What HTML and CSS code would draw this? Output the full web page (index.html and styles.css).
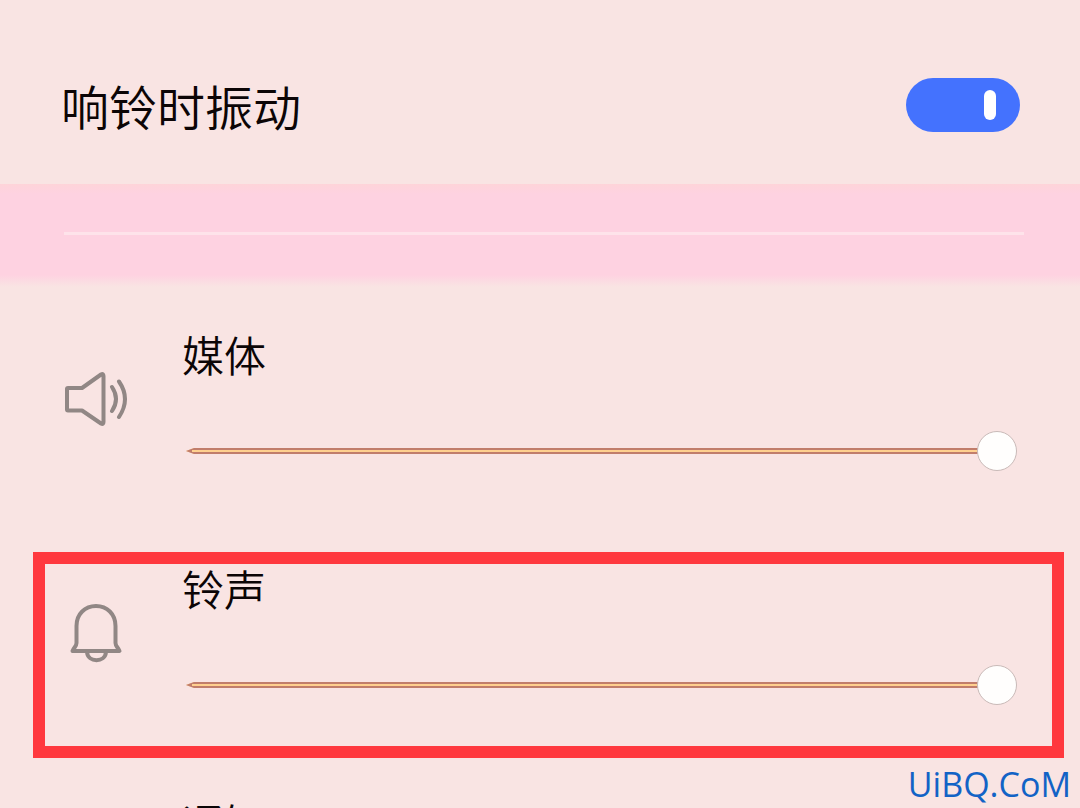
FILE: index.html
```html
<!DOCTYPE html>
<html lang="zh-CN">
<head>
<meta charset="utf-8">
<meta name="viewport" content="width=device-width, initial-scale=1">
<title>响铃时振动</title>
<link rel="stylesheet" href="styles.css">
</head>
<body>
<main class="page">
  <div class="setting">
    <label class="setting-label" for="vibrate">响铃时振动</label>
    <input class="switch" type="checkbox" role="switch" id="vibrate" checked>
  </div>
  <div class="band"><hr class="divider"></div>
  <section class="volumes">
    <div class="volume">
      <svg class="icon" viewBox="0 0 68 68" aria-hidden="true">
        <path d="M6 22H20L39 8.500Q41.500 7 41.500 10V56Q41.500 59 39 57.500L20 44.500H6Q5 44.500 5 43.500V23Q5 22 6 22Z"/>
        <path d="M50 21Q58 33 50 45M57 15.500Q69 33 57 51"/>
      </svg>
      <div class="control">
        <label class="volume-label" for="media">媒体</label>
        <div class="slider"><input class="range" type="range" id="media" min="0" max="100" value="100"></div>
      </div>
    </div>
    <div class="volume highlighted">
      <svg class="icon" viewBox="0 0 68 68" aria-hidden="true">
        <path d="M14.500 26C14.500 14 23 6 34 6S53.500 14 53.500 26V43C53.500 46 56 47.500 57.500 51H10.500C12 47.500 14.500 46 14.500 43Z"/>
        <path d="M25 52C26 63 43 63 44 52"/>
      </svg>
      <div class="control">
        <label class="volume-label" for="ring">铃声</label>
        <div class="slider"><input class="range" type="range" id="ring" min="0" max="100" value="100"></div>
      </div>
    </div>
    <div class="volume">
      <div class="icon"></div>
      <div class="control">
        <label class="volume-label" for="notice">通知</label>
        <div class="slider"><input class="range" type="range" id="notice" min="0" max="100" value="100"></div>
      </div>
    </div>
  </section>
  <div class="watermark">UiBQ.CoM</div>
</main>
</body>
</html>
```
FILE: styles.css
```css
* { box-sizing: border-box; }

body {
  margin: 0;
  background: #f9e4e3;
  color: #0c0506;
  font-family: "Noto Sans CJK SC DemiLight", "Noto Sans CJK SC", sans-serif;
  font-weight: 350;
}

.page {
  position: relative;
  height: 100vh;
  overflow: hidden;
}

.setting {
  display: flex;
  align-items: center;
  justify-content: space-between;
  padding: 71px 60px 45px 61px;
}

.setting-label {
  font-size: 48px;
  line-height: 68px;
}

.switch {
  appearance: none;
  display: flex;
  align-items: center;
  justify-content: flex-end;
  width: 114px;
  height: 54px;
  margin: 0;
  padding-right: 24px;
  border-radius: 27px;
  background: #4472fe;
}

.switch::before {
  content: "";
  width: 12px;
  height: 30px;
  border-radius: 6px;
  background: #fff;
}

.switch:not(:checked) {
  justify-content: flex-start;
  padding-left: 24px;
  background: #b9b2b2;
}

.band {
  padding: 48px 56px 52px 64px;
  background: linear-gradient(#fed4d9, #fed2e1 10px, #fed2e1 91px, #f9e4e3);
}

.divider {
  height: 3px;
  margin: 0;
  border: 0;
  background: #fee3ea;
}

.volumes { padding-top: 31px; }

.volume {
  position: relative;
  display: flex;
  gap: 52px;
  height: 234px;
  padding: 6px 63px 0 62px;
}

.highlighted::after {
  content: "";
  position: absolute;
  inset: 0 16px 28px 33px;
  border: 12px solid #ff383e;
  pointer-events: none;
}

.icon {
  flex: none;
  width: 68px;
  height: 68px;
  margin-top: 42px;
  fill: none;
  stroke: #918785;
  stroke-width: 4px;
  stroke-linecap: round;
  stroke-linejoin: round;
}

.control { flex: 1; }

.volume-label {
  display: block;
  font-size: 42px;
  line-height: 60px;
}

.slider {
  position: relative;
  margin-top: 47px;
  padding-left: 4px;
}

.slider::before {
  content: "";
  position: absolute;
  inset: 17px 20px 17px 4px;
  border: 2px solid #c17d6b;
  border-left-width: 6px;
  background: #ffd08f;
  clip-path: polygon(0 50%, 8px 0, 100% 0, 100% 100%, 8px 100%);
}

.range {
  appearance: none;
  position: relative;
  display: block;
  width: 100%;
  height: 40px;
  margin: 0;
  background: transparent;
}

.range::-webkit-slider-thumb {
  appearance: none;
  width: 40px;
  height: 40px;
  border: 1px solid #c9bab8;
  border-radius: 50%;
  background: #fffefd;
}

.watermark {
  position: absolute;
  right: 9px;
  bottom: 2px;
  color: #1263c6;
  font: 400 34px/44px "Open Sans", sans-serif;
}
```
